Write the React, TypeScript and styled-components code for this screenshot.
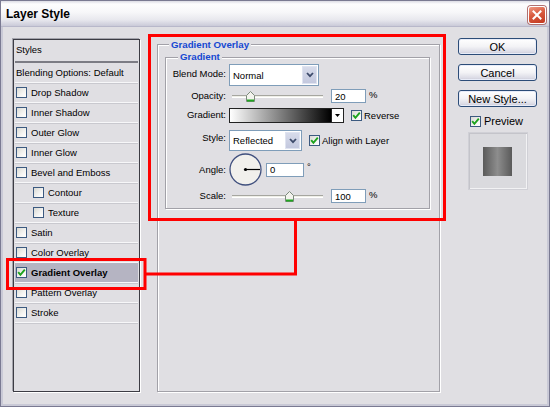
import React from "react";
import styled, { createGlobalStyle } from "styled-components";

const Global = createGlobalStyle`
  html, body { margin: 0; padding: 0; background: #dfdfe3; }
  body { width: 550px; height: 407px; overflow: hidden; font-family: "Liberation Sans", Arial, sans-serif; }
  * { box-sizing: border-box; }
`;

const Window = styled.div`
  position: relative;
  width: 550px;
  height: 407px;
  border: 1px solid #7a7a92;
  display: flex;
  flex-direction: column;
  background: #e0dfe3;
`;

const TitleBar = styled.div`
  height: 26px;
  flex: none;
  display: flex;
  align-items: center;
  padding: 0 3px 0 5px;
  background: linear-gradient(180deg, #dcdce5 0%, #fdfdfe 12%, #f7f7f9 45%, #e8e8ee 75%, #cacad8 100%);
  border-bottom: 1px solid #b8b8ca;
`;

const Title = styled.div`
  flex: 1;
  font: bold 12px "Liberation Sans", Arial, sans-serif;
  color: #000;
  padding-top: 1px;
`;

const CloseBtn = styled.div`
  width: 18px;
  height: 18px;
  margin-top: 3px;
  border-radius: 3px;
  border: 1px solid #fff;
  box-shadow: 0 0 0 1px #b07070;
  background: linear-gradient(160deg, #ef9a84 0%, #d95b40 45%, #c2381f 100%);
  display: flex;
  align-items: center;
  justify-content: center;
`;

const Body = styled.div`
  flex: 1;
  display: flex;
  padding: 12px 10px 12px 10px;
  border: 2px solid #c9c9d6;
  border-top: none;
`;

const ListBox = styled.div`
  width: 127px;
  flex: none;
  border: 1px solid #3c3c44;
  box-shadow: 1px 1px 0 #ffffff, -1px -1px 0 #a4a4ac;
  display: flex;
  flex-direction: column;
  padding: 0 1px;
  font-size: 9.5px;
  color: #000;
`;

const ListRow = styled.div<{ $indent?: boolean; $selected?: boolean; $header?: boolean }>`
  height: ${(p) => (p.$header ? "23px" : "20px")};
  flex: none;
  display: flex;
  align-items: center;
  gap: 4px;
  padding-left: ${(p) => (p.$indent ? "18px" : "1px")};
  padding-bottom: ${(p) => (p.$header ? "3px" : "0")};
  font-weight: ${(p) => (p.$selected ? "bold" : "normal")};
  background: ${(p) => (p.$selected ? "#b5b4c2" : "transparent")};
  border-bottom: ${(p) => (p.$header ? "2px solid #7c7c84" : "1px solid #f7f7f9")};
  box-shadow: ${(p) => (p.$header ? "none" : "0 1px 0 #c9c9cf")};
  white-space: nowrap;
`;

const BoxCheck = styled.span`
  width: 11px;
  height: 11px;
  flex: none;
  border: 1px solid #3c5a80;
  background: linear-gradient(135deg, #d9d9d3 0%, #f4f4f2 60%, #ffffff 100%);
  display: inline-flex;
  align-items: center;
  justify-content: center;
`;

const Check: React.FC<{ checked?: boolean }> = ({ checked }) => (
  <BoxCheck>
    {checked && (
      <svg width="9" height="9" viewBox="0 0 9 9">
        <polyline points="1.2,4.2 3.4,6.8 7.8,1.6" fill="none" stroke="#1da31d" strokeWidth="1.9" />
      </svg>
    )}
  </BoxCheck>
);

const Group = styled.fieldset<{ $outer?: boolean }>`
  margin: ${(p) => (p.$outer ? "0 0 0 17px" : "1px 0 0 0")};
  width: ${(p) => (p.$outer ? "283px" : "auto")};
  min-width: 0;
  padding: ${(p) => (p.$outer ? "0 9px 0 7px" : "1px 0 5px 0")};
  border: 1px solid #a2a1a8;
  box-shadow: inset 1px 1px 0 #ffffff, 1px 1px 0 #ffffff;
  align-self: ${(p) => (p.$outer ? "stretch" : "auto")};
`;

const Legend = styled.legend<{ $outer?: boolean }>`
  margin-left: ${(p) => (p.$outer ? "4px" : "12px")};
  padding: 0 2px;
  font: bold 9.7px "Liberation Sans", Arial, sans-serif;
  line-height: ${(p) => (p.$outer ? "11px" : "12px")};
  color: #1548d2;
  background: #e0dfe3;
`;

const FormRow = styled.div<{ $h: number; $mt: number }>`
  display: grid;
  grid-template-columns: 60px auto;
  column-gap: 3px;
  align-items: center;
  height: ${(p) => p.$h}px;
  margin-top: ${(p) => p.$mt}px;
  font-size: 9.5px;
  color: #000;
`;

const Label = styled.div<{ $dy?: number }>`
  text-align: right;
  white-space: nowrap;
  position: relative;
  top: ${(p) => p.$dy ?? 0}px;
`;

const Controls = styled.div`
  display: flex;
  align-items: center;
  height: 100%;
`;

const Select = styled.div<{ $w: number }>`
  width: ${(p) => p.$w}px;
  height: 100%;
  border: 1px solid #7f9db9;
  background: #fff;
  display: flex;
  padding: 1px;
`;

const SelectText = styled.div`
  flex: 1;
  display: flex;
  align-items: center;
  padding-left: 2px;
  font-size: 9.5px;
`;

const SelectBtn = styled.div`
  width: 15px;
  border: 1px solid #dfe3f0;
  background: linear-gradient(180deg, #d7dbea 0%, #c3c8de 100%);
  display: flex;
  align-items: center;
  justify-content: center;
`;

const Chevron = () => (
  <svg width="8" height="6" viewBox="0 0 8 6">
    <polyline points="1,1 4,4.2 7,1" fill="none" stroke="#3d4a6a" strokeWidth="1.8" />
  </svg>
);

const SliderWrap = styled.div`
  position: relative;
  width: 91px;
  height: 100%;
  margin-left: 3px;
  display: flex;
  align-items: center;
`;

const Track = styled.div`
  width: 100%;
  height: 3px;
  border-top: 1px solid #a6a6a0;
  background: #efefe8;
  border-bottom: 1px solid #ffffff;
`;

const Thumb = styled.svg`
  position: absolute;
  top: 2px;
`;

const Slider: React.FC<{ pct: number }> = ({ pct }) => (
  <SliderWrap>
    <Track />
    <Thumb width="9" height="11" viewBox="0 0 9 11" style={{ left: `${(pct / 100) * 91 - 4}px` }}>
      <polygon points="0.5,4.5 4.5,0.5 8.5,4.5 8.5,10.5 0.5,10.5" fill="#f3f3ee" stroke="#7c8a7c" strokeWidth="1" />
      <line x1="1" y1="9.5" x2="8" y2="9.5" stroke="#21a521" strokeWidth="2" />
    </Thumb>
  </SliderWrap>
);

const TextInput = styled.div<{ $w: number; $ml: number; $h?: number }>`
  width: ${(p) => p.$w}px;
  height: ${(p) => p.$h ?? 14}px;
  margin-left: ${(p) => p.$ml}px;
  border: 1px solid #7f9db9;
  background: #fff;
  padding-left: 3px;
  font-size: 9.5px;
  display: flex;
  align-items: center;
`;

const Unit = styled.span<{ $dy?: number }>`
  margin-left: 3px;
  position: relative;
  top: ${(p) => p.$dy ?? -2}px;
  font-size: 9.5px;
`;

const GradientBar = styled.div`
  width: 103px;
  height: 100%;
  border: 1px solid #222;
  background: linear-gradient(90deg, #ffffff 0%, #000000 100%);
`;

const GradArrow = styled.div`
  width: 12px;
  height: 100%;
  border: 1px solid #222;
  border-left: none;
  background: #fff;
  display: flex;
  align-items: center;
  justify-content: center;
`;

const InlineCheck = styled.label<{ $ml: number }>`
  display: flex;
  align-items: center;
  gap: 2px;
  margin-left: ${(p) => p.$ml}px;
  white-space: nowrap;
`;

const AngleDial = styled.svg`
  flex: none;
`;

const RightCol = styled.div`
  width: 79px;
  flex: none;
  margin-left: 18px;
  margin-top: -1px;
  display: flex;
  flex-direction: column;
  align-items: center;
  gap: 9px;
`;

const Button = styled.div`
  width: 79px;
  height: 17px;
  border: 1px solid #2c4c78;
  border-radius: 3px;
  background: linear-gradient(180deg, #ffffff 0%, #f3f3f6 50%, #dcdce6 85%, #c8c8d6 100%);
  box-shadow: inset 0 0 0 1px #e8ecf8;
  font: 11px "Liberation Sans", Arial, sans-serif;
  display: flex;
  align-items: center;
  justify-content: center;
  color: #000;
`;

const PreviewRow = styled.label`
  display: flex;
  align-items: center;
  gap: 3px;
  font: 11px "Liberation Sans", Arial, sans-serif;
  margin-top: -1px;
  padding-right: 2px;
`;

const Swatch = styled.div`
  width: 60px;
  height: 58px;
  margin-top: -4px;
  background: #dadade;
  border: 1px solid #d0d0d6;
  box-shadow: inset 1px 1px 0 #c4c4ca, inset -1px -1px 0 #f2f2f4;
  display: flex;
  align-items: center;
  justify-content: center;
`;

const SwatchFill = styled.div`
  width: 29px;
  height: 29px;
  background: linear-gradient(90deg, #5a5a5a 0%, #8d8d8d 50%, #5a5a5a 100%);
`;

const Overlay = styled.svg`
  position: absolute;
  left: -1px;
  top: -1px;
  pointer-events: none;
`;

const styles: { name: string; indent?: boolean; checked?: boolean }[] = [
  { name: "Drop Shadow" },
  { name: "Inner Shadow" },
  { name: "Outer Glow" },
  { name: "Inner Glow" },
  { name: "Bevel and Emboss" },
  { name: "Contour", indent: true },
  { name: "Texture", indent: true },
  { name: "Satin" },
  { name: "Color Overlay" },
  { name: "Gradient Overlay", checked: true },
  { name: "Pattern Overlay" },
  { name: "Stroke" },
];

export default function App() {
  return (
    <>
      <Global />
      <Window>
        <TitleBar>
          <Title>Layer Style</Title>
          <CloseBtn>
            <svg width="10" height="10" viewBox="0 0 10 10">
              <path d="M1.5 1.5 L8.5 8.5 M8.5 1.5 L1.5 8.5" stroke="#fff" strokeWidth="2" strokeLinecap="square" />
            </svg>
          </CloseBtn>
        </TitleBar>
        <Body>
          <ListBox>
            <ListRow $header>Styles</ListRow>
            <ListRow>Blending Options: Default</ListRow>
            {styles.map((s) => (
              <ListRow key={s.name} $indent={s.indent} $selected={s.checked}>
                <Check checked={s.checked} />
                {s.name}
              </ListRow>
            ))}
          </ListBox>

          <Group $outer>
            <Legend $outer>Gradient Overlay</Legend>
            <Group>
              <Legend>Gradient</Legend>
              <FormRow $h={22} $mt={0}>
                <Label $dy={-2}>Blend Mode:</Label>
                <Controls>
                  <Select $w={90}>
                    <SelectText>Normal</SelectText>
                    <SelectBtn>
                      <Chevron />
                    </SelectBtn>
                  </Select>
                </Controls>
              </FormRow>
              <FormRow $h={14} $mt={3}>
                <Label $dy={-1}>Opacity:</Label>
                <Controls>
                  <Slider pct={20} />
                  <TextInput $w={35} $ml={8}>20</TextInput>
                  <Unit>%</Unit>
                </Controls>
              </FormRow>
              <FormRow $h={15} $mt={5}>
                <Label $dy={-1}>Gradient:</Label>
                <Controls>
                  <GradientBar />
                  <GradArrow>
                    <svg width="5" height="3" viewBox="0 0 5 3">
                      <polygon points="0,0 5,0 2.5,3" fill="#000" />
                    </svg>
                  </GradArrow>
                  <InlineCheck $ml={7}>
                    <Check checked />
                    Reverse
                  </InlineCheck>
                </Controls>
              </FormRow>
              <FormRow $h={21} $mt={7}>
                <Label $dy={-3}>Style:</Label>
                <Controls>
                  <Select $w={73}>
                    <SelectText>Reflected</SelectText>
                    <SelectBtn>
                      <Chevron />
                    </SelectBtn>
                  </Select>
                  <InlineCheck $ml={7}>
                    <Check checked />
                    Align with Layer
                  </InlineCheck>
                </Controls>
              </FormRow>
              <FormRow $h={32} $mt={2}>
                <Label>Angle:</Label>
                <Controls>
                  <AngleDial width="33" height="33" viewBox="0 0 33 33">
                    <circle cx="16.5" cy="16.5" r="15.5" fill="#f1f0ec" stroke="#40507e" strokeWidth="1.3" />
                    <line x1="16.5" y1="16.5" x2="31" y2="16.5" stroke="#000" strokeWidth="1.2" />
                    <circle cx="16.5" cy="16.5" r="1.6" fill="#000" />
                  </AngleDial>
                  <TextInput $w={38} $ml={4} $h={14}>0</TextInput>
                  <Unit $dy={-3}>°</Unit>
                </Controls>
              </FormRow>
              <FormRow $h={14} $mt={4}>
                <Label $dy={-1}>Scale:</Label>
                <Controls>
                  <Slider pct={63} />
                  <TextInput $w={35} $ml={8}>100</TextInput>
                  <Unit>%</Unit>
                </Controls>
              </FormRow>
            </Group>
          </Group>

          <RightCol>
            <Button>OK</Button>
            <Button>Cancel</Button>
            <Button>New Style...</Button>
            <PreviewRow>
              <Check checked />
              Preview
            </PreviewRow>
            <Swatch>
              <SwatchFill />
            </Swatch>
          </RightCol>
        </Body>
        <Overlay width="550" height="407" viewBox="0 0 550 407">
          <g fill="none" stroke="#ff0000" strokeWidth="3">
            <rect x="149.5" y="35.5" width="295" height="184" />
            <polyline points="295.5,219.5 295.5,274 146,274" />
            <rect x="7.5" y="259.5" width="137.5" height="29" />
          </g>
        </Overlay>
      </Window>
    </>
  );
}
